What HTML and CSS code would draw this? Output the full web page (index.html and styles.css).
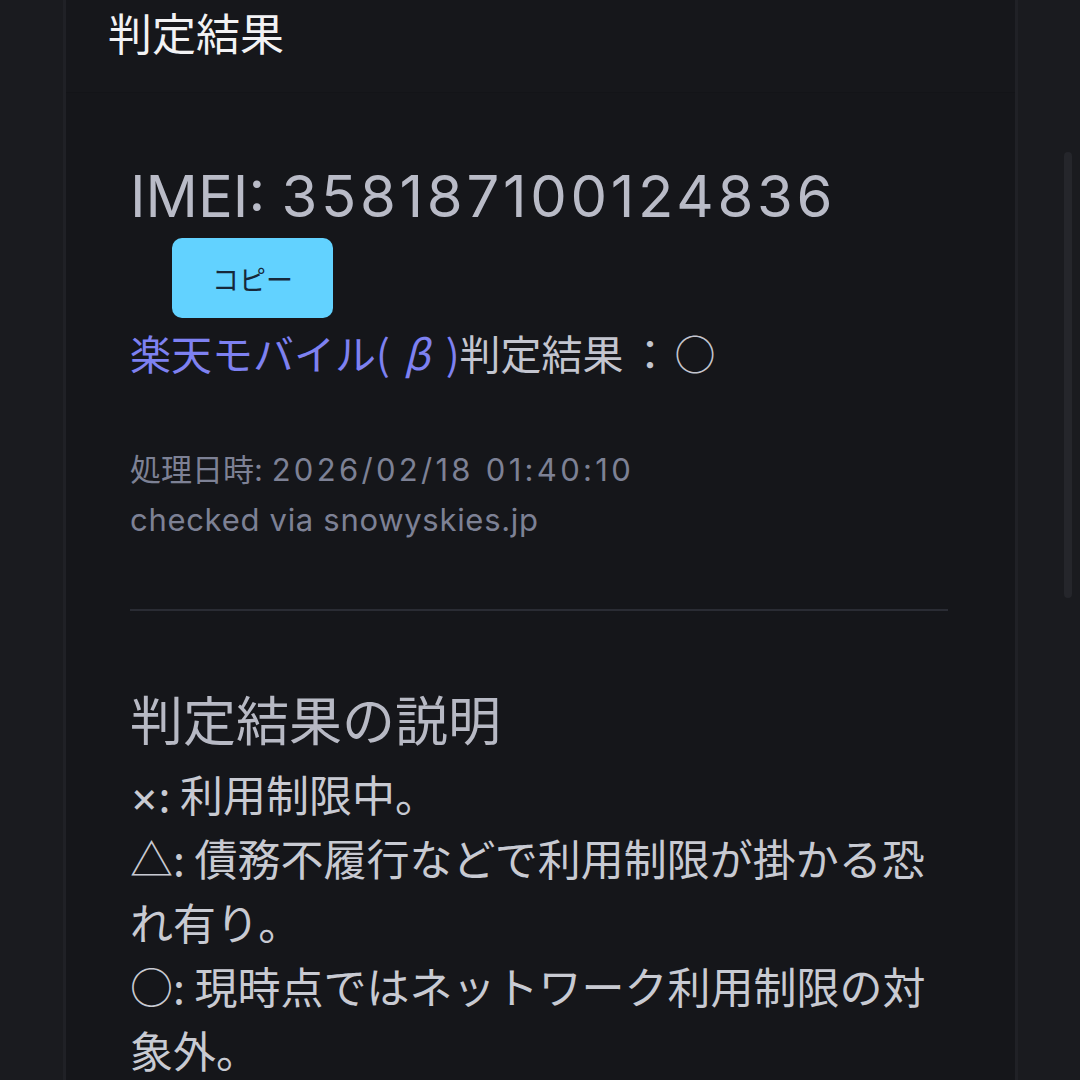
FILE: index.html
```html
<!DOCTYPE html>
<html lang="ja">
<head>
    <meta charset="UTF-8">
    <title>判定結果</title>
    <link rel="stylesheet" href="styles.css">
</head>
<body>
    <div class="sheet">
        <div class="sheet-header">
            <h1>判定結果</h1>
        </div>
        <div class="result">
            <div class="imei">IMEI: <span class="num">358187100124836</span></div>
            <button class="copy-btn">コピー</button>
            <div class="verdict"><a href="#" class="carrier">楽天モバイル(<span class="beta">β</span>)</a>判定結果<span class="colon">：</span>○</div>
            <div class="meta">
                <div>処理日時: <span class="stamp">2026/02/18 01:40:10</span></div>
                <div class="via">checked via snowyskies.jp</div>
            </div>
            <hr class="divider">
            <h2>判定結果の説明</h2>
            <div class="legend">
                <p><span class="mark">×</span>: 利用制限中。</p>
                <p>△: 債務不履行などで利用制限が掛かる恐れ有り。</p>
                <p>○: 現時点ではネットワーク利用制限の対象外。</p>
            </div>
        </div>
    </div>
    <div class="scrollbar"></div>
</body>
</html>
```

FILE: styles.css
```css
/* Base */
body {
    margin: 0;
    height: 1080px;
    overflow: hidden;
    background: #1a1b1f;
    font-family: Inter, "Noto Sans CJK JP", sans-serif;
    color: #c8cad2;
}

/* Sheet */
.sheet {
    margin-left: 63px;
    width: 955px;
    min-height: 1080px;
    background: #15161a;
    border-left: 3px solid #202126;
    border-right: 3px solid #202126;
    box-sizing: border-box;
}

.sheet-header {
    height: 93px;
    padding-left: 42px;
    background: #16171b;
    border-bottom: 1px solid #131418;
    box-sizing: border-box;
}

h1 {
    margin: 0;
    font-family: "Noto Sans CJK JP", sans-serif;
    font-size: 44px;
    font-weight: 400;
    line-height: 64px;
    color: #f2f2f4;
}

/* Result block */
.result {
    padding: 0 67px 0 64px;
}

.imei {
    margin-top: 67px;
    font-size: 58px;
    line-height: 72px;
    color: #b9bbc7;
}

.imei .num {
    letter-spacing: 3.7px;
}

.copy-btn {
    display: block;
    margin: 6px 0 0 42px;
    width: 161px;
    height: 80px;
    border: none;
    border-radius: 10px;
    background: #62d2ff;
    color: #16283a;
    font-family: "Noto Sans CJK JP", sans-serif;
    font-size: 27px;
    cursor: pointer;
}

.verdict {
    margin-top: 4px;
    font-family: "Noto Sans CJK JP", sans-serif;
    font-size: 41px;
    line-height: 60px;
    color: #c3c5cf;
}

.carrier {
    color: #7e81f1;
    text-decoration: none;
}

.beta {
    display: inline-block;
    margin: 0 16px 0 14px;
    font-style: italic;
}

.colon {
    margin: 0 4px 0 6px;
}

.meta {
    margin-top: 63px;
    font-size: 31px;
    line-height: 50px;
    color: #7d8195;
}

.meta .stamp {
    letter-spacing: 3.3px;
}

.meta .via {
    letter-spacing: 0.7px;
}

.divider {
    margin: 64px 0 0;
    border: none;
    height: 2px;
    background: #2a2c34;
}

h2 {
    margin: 72px 0 0;
    font-family: "Noto Sans CJK JP", sans-serif;
    font-size: 53px;
    font-weight: 400;
    line-height: 70px;
    color: #b7b9c4;
}

.legend {
    margin-top: 8px;
    font-family: "Noto Sans CJK JP", sans-serif;
    font-size: 43px;
    line-height: 64px;
}

.legend p {
    margin: 0;
}

.legend .mark {
    font-family: Inter, sans-serif;
    line-height: 0;
}

/* Page scrollbar */
.scrollbar {
    position: absolute;
    top: 152px;
    right: 8px;
    width: 8px;
    height: 446px;
    border-radius: 4px;
    background: #25262b;
}
```
